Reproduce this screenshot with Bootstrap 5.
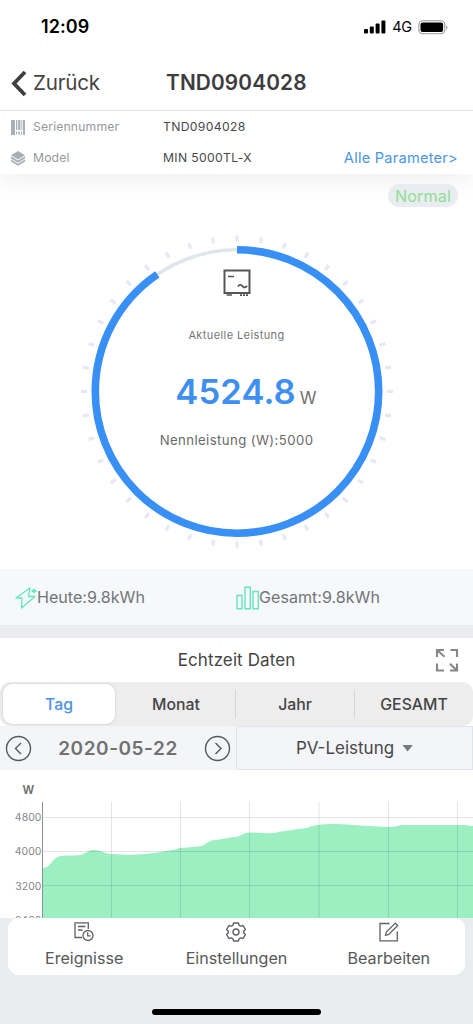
<!DOCTYPE html>
<html lang="de">
<head>
<meta charset="utf-8">
<meta name="viewport" content="width=device-width, initial-scale=1">
<title>TND0904028</title>
<link href="https://cdn.jsdelivr.net/npm/bootstrap@5.3.0/dist/css/bootstrap.min.css" rel="stylesheet">
<style>
body{font-family:Inter,"Liberation Sans",sans-serif;color:#444;background:#fff;line-height:1;overflow:hidden}
svg{display:block;flex:none}
.screen{width:473px;height:1024px;overflow:hidden;white-space:nowrap}
.statusbar{height:54px;padding:0 25px 0 41px;color:#000}
.clock{font-size:18px;font-weight:600;letter-spacing:.1px}
.net{font-size:14.5px;font-weight:400;padding:0 6px 0 6px;letter-spacing:-.2px}
.titlebar{height:57px;border-bottom:1.5px solid #e2e2e3;padding:3px 11px 0}
.back{font-size:20.6px;letter-spacing:-.2px;width:155px;color:#444}
.back span{margin-left:6px}
.heading{font-size:20.8px;font-weight:600;letter-spacing:.15px;color:#3d3d3f}
.info{height:63px;font-size:12.2px;box-shadow:0 10px 22px rgba(0,0,0,.05);padding:1px 15px 0 11px}
.info .line{height:31px}
.lbl{width:130px;letter-spacing:.15px;color:#96999c}
.val{letter-spacing:.33px;color:#48484a}
.allparam{font-size:14.6px;letter-spacing:.24px;color:#4b95e6}
.dial{height:395px}
.state{height:23px;margin:10px 15px 0 0;padding:1px 7px 0;background:#e9ecf0;color:#8fdf95;font-size:16.2px;letter-spacing:.1px}
.gauge{width:320px;height:320px;margin:24px auto 0}
.readout{inset:0;padding-top:38px}
.cap1{font-size:11px;letter-spacing:.4px;color:#767678;margin-top:33px}
.power{font-size:34.6px;font-weight:600;color:#3e8ff0;letter-spacing:.1px}
.unit{font-size:17px;color:#707072}
.powerrow{margin-top:33px;padding-left:19px}
.rated{font-size:13.2px;letter-spacing:.4px;color:#6a6a6c;margin-top:25px}
.totals{height:56px;background:#f5f9fc;font-size:16.1px;color:#737578;padding:1px 0 0 15px}
.totals .half{width:221px}
.strip{height:13px;background:#ebecf0}
.sect{height:44px;font-size:17px;color:#444;letter-spacing:.1px}
.expand{right:14px;top:10px}
.seg{height:44px;background:#ededee;border-radius:10px;padding:2px 0;font-size:15.8px;font-weight:500;color:#444446}
.seg .opt{flex:1 1 0;height:40px;padding-top:1px}
.seg .sel{flex:0 0 112px;background:#fff;color:#4992e6;border-radius:9px;box-shadow:0 0 3px rgba(0,0,0,.16);margin:0 2px 0 3px}
.seg .rule{width:1px;height:28px;background:#d6d6d8}
.picker{height:44px;background:#f4f5f7}
.datepart{width:236px;padding:0 5px}
.datetxt{font-size:19px;font-weight:600;color:#707173;letter-spacing:.55px}
.series{border:1px solid #dfe4ea;background:#f3f5f8;font-size:17px;color:#48484a}
.tri{width:11px;height:7px;background:#77797c;clip-path:polygon(0 0,100% 0,50% 100%)}
.plot{height:148px}
.plot text{font-family:Inter,sans-serif}
.foot{height:106px;background:#eaedf0;padding:0 8px}
.tabs3{height:57px;background:#fff;border-radius:11px;font-size:16.1px;color:#56585a}
.tabs3 span{margin-top:8px}
.homebar{width:169px;height:6px;border-radius:3px;background:#000;margin:34px auto 0}
</style>
</head>
<body>
<div class="screen d-flex flex-column">
  <header>
    <div class="statusbar d-flex align-items-center justify-content-between">
      <span class="clock">12:09</span>
      <div class="d-flex align-items-center">
        <svg width="22" height="14" viewBox="0 0 22 14"><rect x="0" y="9" width="4" height="4.5" rx="1"/><rect x="5.8" y="6.5" width="4" height="7" rx="1"/><rect x="11.6" y="3.5" width="4" height="10" rx="1"/><rect x="17.4" y=".5" width="4" height="13" rx="1"/></svg>
        <span class="net">4G</span>
        <svg width="30" height="15" viewBox="0 0 30 15"><rect x=".8" y=".8" width="26" height="13" rx="4" fill="#fff" stroke="#999" stroke-width="1.1"/><rect x="2.5" y="2.5" width="22.6" height="9.6" rx="2"/><path d="M28.300 5q2.400 2.400 0 4.800z" fill="#999"/></svg>
      </div>
    </div>
    <div class="titlebar d-flex align-items-center">
      <a class="back d-flex align-items-center text-decoration-none" href="#">
        <svg width="16" height="27" viewBox="0 0 16 27"><path d="M14 2 3 13.500 14 25" fill="none" stroke="#3f3f41" stroke-width="3.800"/></svg>
        <span>Zurück</span>
      </a>
      <h1 class="heading m-0">TND0904028</h1>
    </div>
  </header>

  <section class="info">
    <div class="line d-flex align-items-center">
      <svg class="me-2" width="14" height="15" viewBox="0 0 14 15" fill="#a7b0b5"><path d="M0 0h4v15H0zM5 0h1.300v10H5zM7.200 0h2.200v10H7.200zM10.400 0h.9v10h-.9zM12 0h2v15h-2zM5 11.500h1v3H5zM7.200 11.500h1.600v3H7.200zM10 11.500h1v3h-1z"/></svg>
      <span class="lbl">Seriennummer</span><span class="val">TND0904028</span>
    </div>
    <div class="line d-flex align-items-center">
      <svg class="me-2" width="14" height="15" viewBox="0 0 14 15" fill="#a7b0b5"><path d="M7 0l7 4.200-7 4.200-7-4.200z"/><path d="M0 5.300l7 4.200 7-4.200v2.200l-7 4.200-7-4.200zM0 8.500l7 4.200 7-4.200v2L7 14.800 0 10.500z"/></svg>
      <span class="lbl">Model</span><span class="val">MIN 5000TL-X</span>
      <a class="allparam text-decoration-none ms-auto" href="#">Alle Parameter&gt;</a>
    </div>
  </section>

  <section class="dial">
    <div class="d-flex justify-content-end"><span class="state rounded-pill d-flex align-items-center">Normal</span></div>
    <div class="gauge position-relative">
      <svg width="320" height="320" viewBox="0 0 320 320" fill="none">
        <circle cx="160" cy="160.500" r="153" stroke="#e6e8f6" stroke-width="6" pathLength="400" stroke-dasharray="1.340 8.660" transform="rotate(-90.600 160 160.500)"/>
        <circle cx="160" cy="160.500" r="141.700" stroke="#e0e7ea" stroke-width="3.500"/>
        <circle cx="160" cy="160.500" r="141.700" stroke="#388ff5" stroke-width="7.600" pathLength="1000" stroke-dasharray="904.960 95.040" transform="rotate(-90 160 160.500)"/>
      </svg>
      <div class="readout position-absolute d-flex flex-column align-items-center">
        <svg width="28" height="28" viewBox="0 0 28 28" fill="none" stroke="#55565a"><path d="M1.500 1.500h25v22.500h-25z" stroke-width="2"/><path d="M5 7.500h6M3.500 26h5.500" stroke-width="1.700"/><path d="M15 17.500q2.200-3 4.500-.3t4.500-.5" stroke-width="1.900"/><path d="M17 26.200h8" stroke-width="1.800" stroke-dasharray="2 1"/></svg>
        <div class="cap1">Aktuelle Leistung</div>
        <div class="powerrow d-flex align-items-baseline"><span class="power">4524.8</span><span class="unit ms-1">W</span></div>
        <div class="rated">Nennleistung (W):5000</div>
      </div>
    </div>
  </section>

  <section class="totals d-flex align-items-center">
    <div class="half d-flex align-items-center">
      <svg width="22" height="22" viewBox="0 0 22 22" fill="none" stroke="#66e5b8" stroke-width="1.300" stroke-linejoin="round"><path d="M15 1 1 11h6L6.500 21 20 9.500h-6.500L15 1z"/><path d="M16.500 4h5M19 2v4" stroke-width="2"/></svg>
      <span>Heute:9.8kWh</span>
    </div>
    <div class="d-flex align-items-center">
      <svg width="23" height="24" viewBox="0 0 23 24" fill="none" stroke="#66e5b8" stroke-width="1.400"><path d="M1 9.500h5v13.300H1zM9 1.200h5.300v21.600H9zM17 5.500h5.300v17.300H17z"/></svg>
      <span>Gesamt:9.8kWh</span>
    </div>
  </section>
  <div class="strip"></div>

  <section class="sect position-relative d-flex align-items-center justify-content-center">
    Echtzeit Daten
    <svg class="expand position-absolute" width="24" height="24" viewBox="0 0 24 24" fill="none" stroke="#858789" stroke-width="2.100"><path d="M2 9V2h7M2 2l7.500 6.800M15.500 2H22v7M2 15.500v7h7M22 15.500v7h-7M15 15.800l7 6.700"/></svg>
  </section>

  <nav class="seg d-flex align-items-center">
    <a class="opt sel d-flex align-items-center justify-content-center text-decoration-none" href="#">Tag</a>
    <span class="opt d-flex align-items-center justify-content-center">Monat</span>
    <i class="rule"></i>
    <span class="opt d-flex align-items-center justify-content-center">Jahr</span>
    <i class="rule"></i>
    <span class="opt d-flex align-items-center justify-content-center">GESAMT</span>
  </nav>

  <section class="picker d-flex">
    <div class="datepart d-flex align-items-center justify-content-between">
      <svg width="27" height="27" viewBox="0 0 27 27" fill="none" stroke="#56585b" stroke-width="1.400"><circle cx="13.500" cy="13.500" r="12"/><path d="M16 8l-5.500 5.500L16 19"/></svg>
      <span class="datetxt">2020-05-22</span>
      <svg width="27" height="27" viewBox="0 0 27 27" fill="none" stroke="#56585b" stroke-width="1.400"><circle cx="13.500" cy="13.500" r="12"/><path d="M11.500 8l5.500 5.500-5.500 5.500"/></svg>
    </div>
    <div class="series flex-grow-1 d-flex align-items-center justify-content-center"><span>PV-Leistung</span><i class="tri ms-2"></i></div>
  </section>

  <section class="plot">
    <svg width="473" height="148" viewBox="0 770 473 148">
      <path d="M43 918V868C51 868 52 857 61 856C70 855 74 856 80 855C87 853 89 850 94 850C101 850 105 854 112 854L130 855C142 854 148 854 155 853C164 851 171 851 180 848C190 847 196 847 202 846C208 843 209 840 216 840C226 839 228 837 237 837C243 835 243 833 249 832.500C260 832 266 834 274 833C281 831 289 831 297 829C307 829 310 826 317 825C335 823 344 824 360 825.500L388 827C398 827 396 825 405 825H462C468 825 469 826 473 826V918z" fill="#9befc1"/>
      <g stroke="#000" stroke-opacity=".1"><path d="M43 817.500h430M43 851.500h430M43 885.500h430M111.500 802v116M180.500 802v116M249.500 802v116M319 802v116M388.500 802v116M457.500 802v116"/></g>
      <path d="M42.500 802v116" stroke="#8d9092"/>
      <g font-size="10.400" fill="#858789" letter-spacing=".1" text-anchor="end"><text x="41.500" y="821.300">4800</text><text x="41.500" y="855.300">4000</text><text x="41.500" y="889.600">3200</text><text x="41.500" y="923.800">2400</text></g>
      <text x="22.500" y="794" font-size="11.500" font-weight="600" fill="#6c6d70">W</text>
    </svg>
  </section>

  <footer class="foot">
    <div class="tabs3 row g-0 text-center">
      <div class="col-4 d-flex flex-column align-items-center pt-1">
        <svg width="20" height="20" viewBox="0 0 20 20" fill="none" stroke="#5f6164" stroke-width="1.300"><path d="M8 15.500H1V.8h13.300V7M4 4.500h7.500M4 8h4.500"/><circle cx="14" cy="13.500" r="5"/><path d="M13.700 10.300v3.500h2.800"/></svg>
        <span>Ereignisse</span>
      </div>
      <div class="col-4 d-flex flex-column align-items-center pt-1">
        <svg width="20" height="20" viewBox="0 0 20 20" fill="none" stroke="#5f6164" stroke-width="1.400" stroke-linejoin="round"><path d="M7.600 1h4.800l.7 2.300 1.600.9 2.400-.7 2.300 4.100-1.700 1.600v1.700l1.700 1.600-2.300 4-2.400-.6-1.600.9-.7 2.200H7.600l-.7-2.200-1.600-.9-2.400.6-2.300-4 1.700-1.600V9.200L.6 7.600l2.300-4.100 2.400.7 1.600-.9z"/><circle cx="10" cy="10" r="3"/></svg>
        <span>Einstellungen</span>
      </div>
      <div class="col-4 d-flex flex-column align-items-center pt-1">
        <svg width="20" height="20" viewBox="0 0 20 20" fill="none" stroke="#5f6164" stroke-width="1.300"><path d="M10.500 1.500H1v17.300h17.300V9.500"/><path d="M6.500 13.300l.8-3.200 9-9 2.400 2.400-9 9z"/></svg>
        <span>Bearbeiten</span>
      </div>
    </div>
    <div class="homebar"></div>
  </footer>
</div>
<script src="https://cdn.jsdelivr.net/npm/bootstrap@5.3.0/dist/js/bootstrap.bundle.min.js"></script>
</body>
</html>
